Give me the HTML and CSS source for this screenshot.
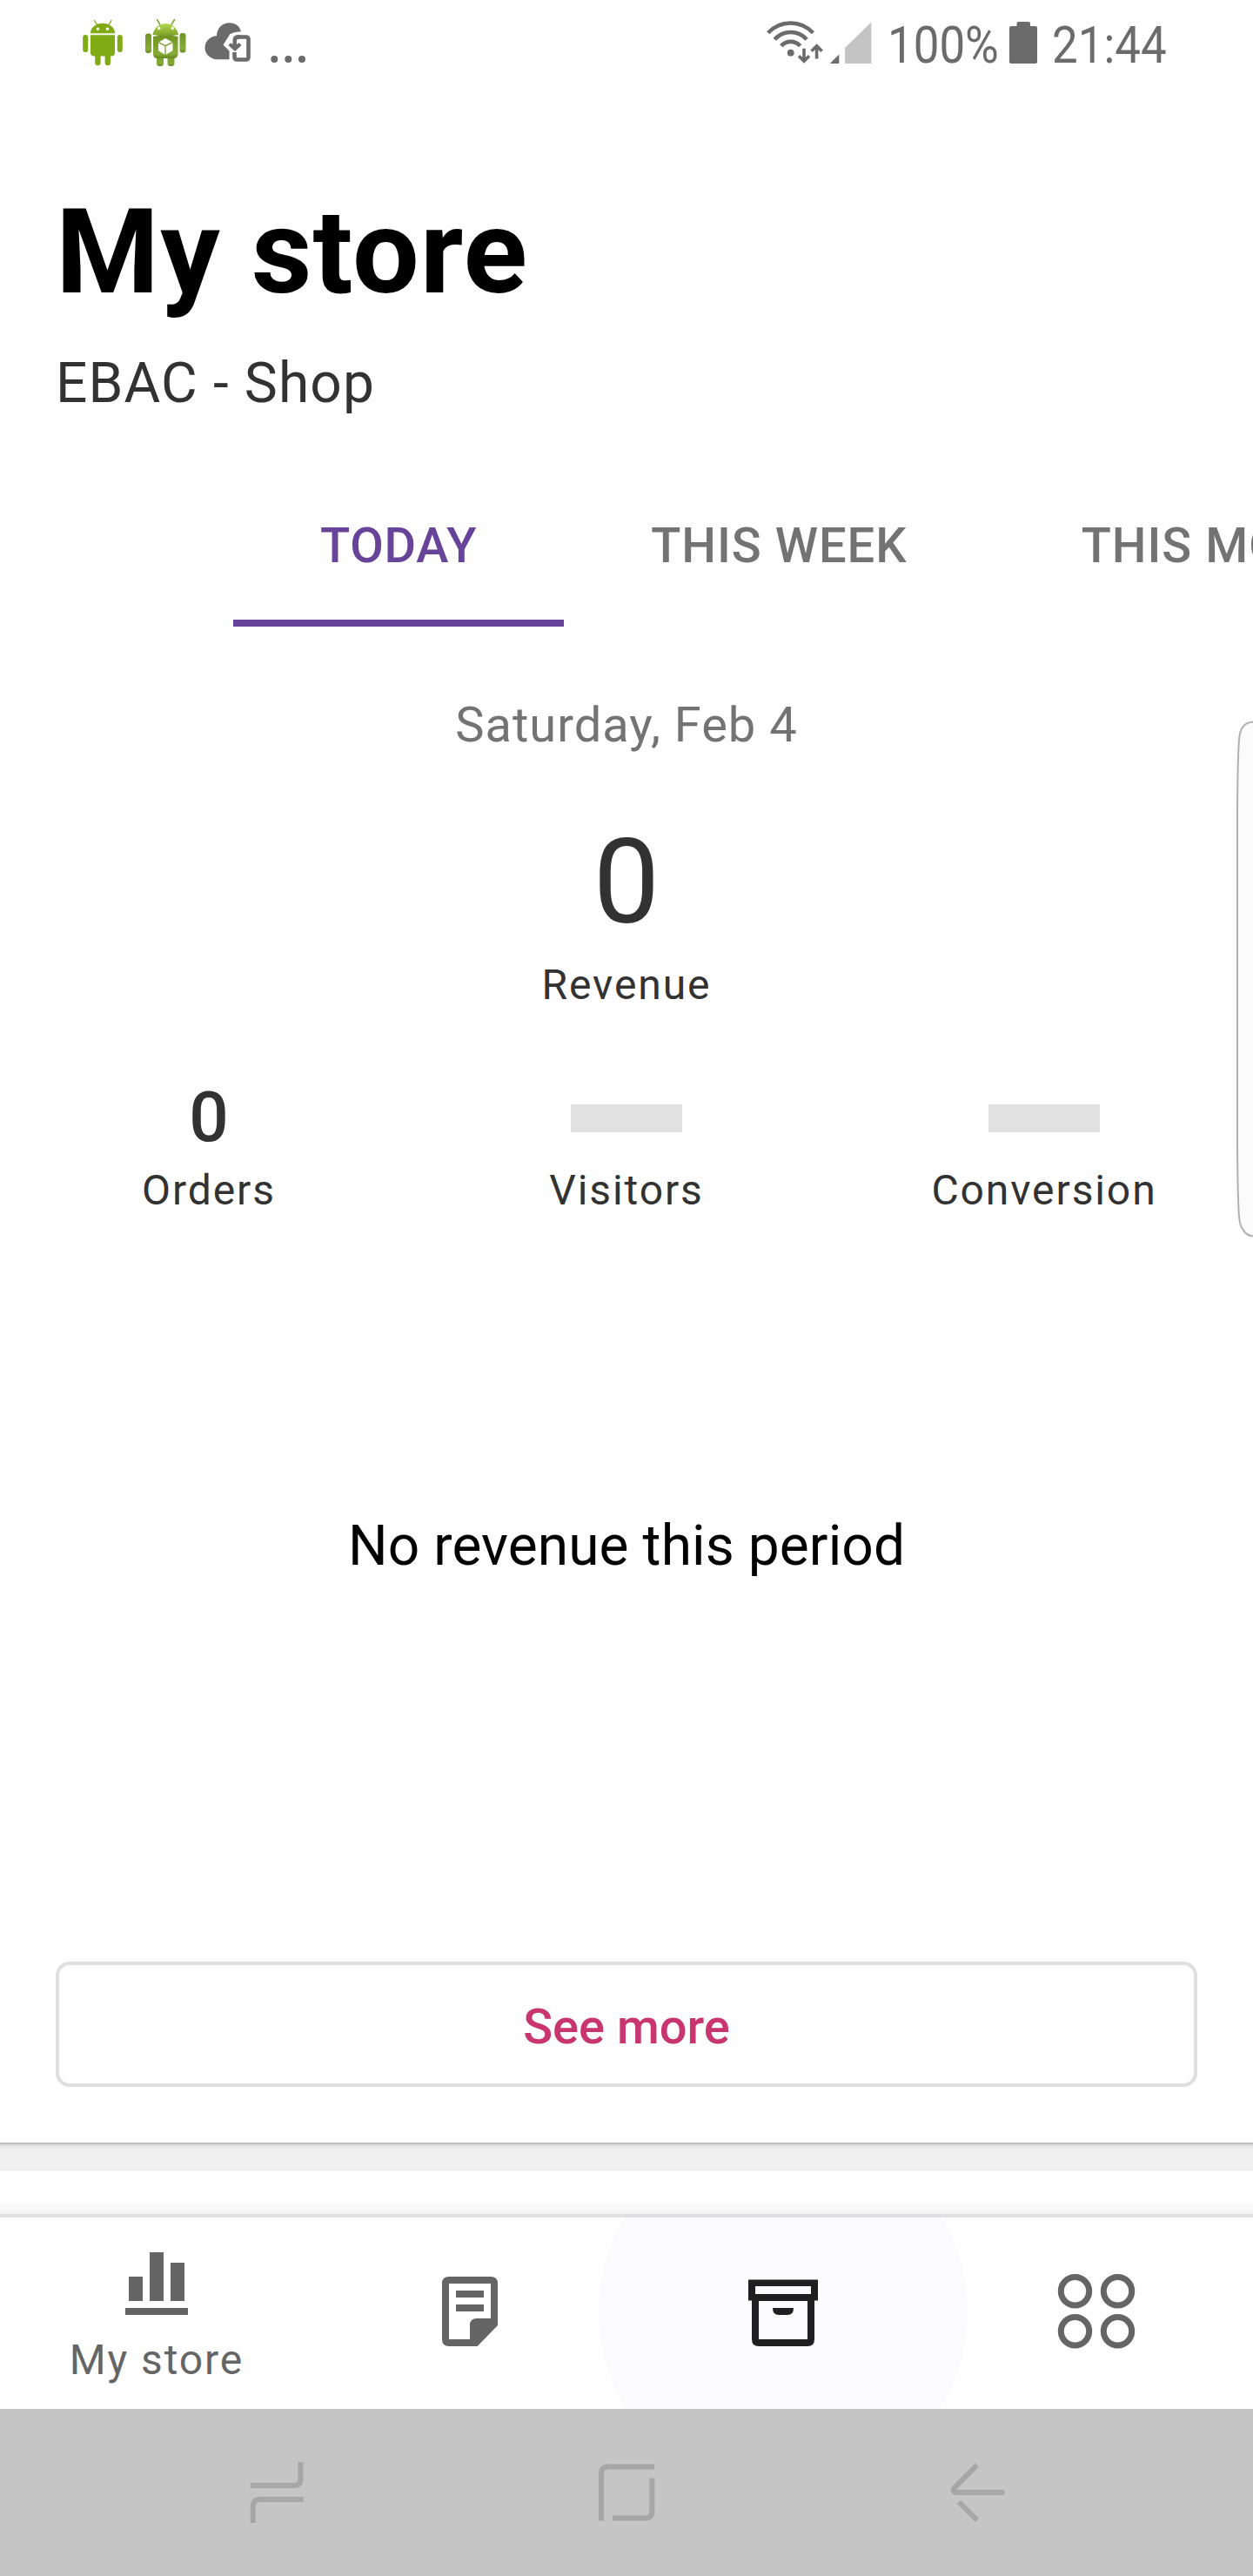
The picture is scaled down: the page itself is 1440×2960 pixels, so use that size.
FILE: index.html
```html
<!DOCTYPE html>
<html lang="en">
<head>
<meta charset="utf-8">
<title>My store</title>
<link rel="stylesheet" href="styles.css">
</head>
<body>
<div class="screen">
  <header class="status">
    <svg width="280" height="100" viewBox="80 0 280 100">
      <defs>
        <linearGradient id="lime" x1="0" y1="0" x2="0" y2="1">
          <stop offset="0" stop-color="#b4dc50"/><stop offset="1" stop-color="#7c9c28"/>
        </linearGradient>
        <linearGradient id="moss" x1="0" y1="0" x2="0" y2="1">
          <stop offset="0" stop-color="#6f9423"/><stop offset="0.8" stop-color="#86ac35"/><stop offset="1" stop-color="#668822"/>
        </linearGradient>
      </defs>
      <g fill="#80ab14">
        <path d="M108.5 23.5l3.5 6M128 23.5l-3.5 6" stroke="#80ab14" stroke-width="1.4" stroke-linecap="round"/>
        <path d="M104 38.2a14 11.5 0 0 1 28 0z"/>
        <path d="M104 40.2h28v20.3q0 4-4 4h-1V72a3.2 3.2 0 0 1-6.4 0v-7.5h-5V72a3.2 3.2 0 0 1-6.4 0v-7.5h-1.2q-4 0-4-4z"/>
        <rect x="95.2" y="40" width="6" height="20" rx="3"/>
        <rect x="134.8" y="40" width="6" height="20" rx="3"/>
        <circle cx="112.5" cy="33.3" r="1.7" fill="#fff"/>
        <circle cx="123.5" cy="33.3" r="1.7" fill="#fff"/>
      </g>
      <g fill="url(#moss)">
        <path d="M180.5 22.5l3.5 6M200.5 22.5l-3.5 6" stroke="#86a83c" stroke-width="1.6" stroke-linecap="round"/>
        <rect x="180" y="60" width="8" height="16" rx="3.5"/>
        <rect x="192.5" y="60" width="8" height="16" rx="3.5"/>
        <rect x="167" y="38.5" width="7" height="22.5" rx="3"/>
        <rect x="206.5" y="38" width="7" height="22.5" rx="3"/>
        <path d="M176 42q14.500-3.500 28.500 0v20q0 5-5 5h-18.500q-5 0-5-5z"/>
        <path d="M175.500 40a15 16 0 0 1 29.500 0q-14.500 2.500-29.500 0z" fill="url(#lime)"/>
        <circle cx="182.8" cy="32.5" r="1.7" fill="#fff"/>
        <circle cx="198.2" cy="32.5" r="1.7" fill="#fff"/>
        <path d="M190 44l8.500 4.700v9.600L190 63l-8-4.700v-9.600z" fill="#fff"/>
        <path d="M182 48.700l8 4 8.500-4M190 52.700V63" fill="none" stroke="#7b9e32" stroke-width="1.3"/>
      </g>
      <g fill="#6b6b6b">
        <path d="M263.500 68.200H250a14 13.500 0 0 1-1-27C249.500 32 255.500 26.200 263.500 26.200c7 0 12 3.800 13.500 10-7 .5-11 1.500-13.500 4.300L256.500 51.500l7 7z"/>
        <rect x="269.500" y="42.500" width="16" height="26" rx="2.500" fill="#fefefe" stroke="#6b6b6b" stroke-width="4.600"/>
        <path d="M264 39h8.500v21H264z" fill="#fefefe"/>
        <path d="M276 40.200h-3.500q-5 .3-5 6V51l-2.300-1.800-2.700 2.800 7.500 7 7.500-7-2.700-2.800-2.800 1.800V47q0-2.200 2-2.200h2z"/>
        <circle cx="315.300" cy="68" r="4"/><circle cx="331.300" cy="68" r="4"/><circle cx="347" cy="68" r="4"/>
      </g>
    </svg>
    <div class="status-right">
      <svg width="130" height="60" viewBox="878 20 130 60">
        <g fill="none" stroke="#6b6b6b" stroke-width="4.600">
          <path d="M882.800 37.800a35 35 0 0 1 51.500 0"/>
          <path d="M890.300 45.300a24.500 24.500 0 0 1 36.800 0"/>
          <path d="M897.800 52.800a14.500 14.500 0 0 1 21.800 0"/>
          <path d="M924 55.800v14M918 64.200l6 6 6-6M938.600 67.500v-14M932.600 58.800l6-6 6 6" stroke-width="3.600"/>
        </g>
        <circle cx="908.700" cy="60.700" r="3.900" fill="#6b6b6b"/>
        <path d="M964.300 62.500V73H953.800z" fill="#6b6b6b"/>
        <path d="M1001.300 25.500V73H971V55z" fill="#c4c4c4"/>
      </svg>
      <span class="percent">100%</span>
      <svg class="battery" width="32" height="48" viewBox="0 0 32 48">
        <path d="M2 5h6.500V2q0-2 2-2h11.500q2 0 2 2v3H30q2 0 2 2v39q0 2-2 2H2q-2 0-2-2V7q0-2 2-2z" fill="#6b6b6b"/>
      </svg>
      <span class="clock">21:44</span>
    </div>
  </header>

  <main class="card">
    <h1 class="title">My store</h1>
    <p class="shop">EBAC - Shop</p>
    <nav class="tabs">
      <a class="tab active">TODAY</a>
      <a class="tab">THIS WEEK</a>
      <a class="tab">THIS MONTH</a>
    </nav>
    <p class="date">Saturday, Feb 4</p>
    <p class="revenue">0</p>
    <p class="label">Revenue</p>
    <div class="stats">
      <div class="stat"><div class="value">0</div><div class="label">Orders</div></div>
      <div class="stat"><div class="value"><i class="skeleton"></i></div><div class="label">Visitors</div></div>
      <div class="stat"><div class="value"><i class="skeleton"></i></div><div class="label">Conversion</div></div>
    </div>
    <p class="empty">No revenue this period</p>
    <button class="more">See more</button>
  </main>
  <div class="gap"></div>
  <div class="next-card"></div>

  <nav class="bottom">
    <a class="item current">
      <svg width="96" height="96" viewBox="0 0 24 24" fill="#656565"><path d="M4 10h4v7H4zM10 3h4v14h-4zM16 6h4v11h-4zM3 19h18v2H3z"/></svg>
      <span class="item-label">My store</span>
    </a>
    <a class="item">
      <svg width="96" height="96" viewBox="0 0 96 96" fill="#656565"><path fill-rule="evenodd" d="M24 8h48q8 0 8 8v48L56.600 88H24q-8 0-8-8V16q0-8 8-8zM24 16v64h24V64q0-8 8-8h16V16z"/><path d="M32 24h32v8H32zM32 40h32v8H32z"/></svg>
    </a>
    <a class="item ripple">
      <svg width="96" height="96" viewBox="0 0 96 96" fill="#202020"><path fill-rule="evenodd" d="M8 11.500h80v24h-4V80q0 8-8 8H20q-8 0-8-8V35.500H8zM16 19v9h64v-9zM20 36v44h56V36z"/><path d="M36 44h24q0 8-7 8H43q-7 0-7-8z"/></svg>
    </a>
    <a class="item">
      <svg width="96" height="96" viewBox="0 0 96 96" fill="none" stroke="#656565" stroke-width="7"><circle cx="23.500" cy="24.700" r="16.200"/><circle cx="72.500" cy="24.700" r="16.200"/><circle cx="23.500" cy="70.700" r="16.200"/><circle cx="72.500" cy="70.700" r="16.200"/></svg>
    </a>
  </nav>

  <footer class="system">
    <svg width="70" height="80" viewBox="0 0 70 80"><path d="M4.800 33H54.500q8 0 8-8V6M65.800 49H16q-8.200 0-8.200 8V76"/></svg>
    <svg width="70" height="80" viewBox="0 0 70 80"><path d="M67 11.500H14q-8 0-8 8V73.500M64.300 24.500V62.500q0 8-8 8H19"/></svg>
    <svg width="70" height="80" viewBox="0 0 70 80"><path d="M67.200 41H12q-5-1-2.500-5L35.800 9.700M15 52l21 21"/></svg>
  </footer>

  <div class="edge-panel">
    <svg width="22" height="600" viewBox="0 0 22 600" fill="#fbfbfb" stroke="#b0b0b0" stroke-width="2"><path d="M24 5.500q-10 0-14 6.500-3 3-4 14-1.500 18-2 80v388q.5 62 2 80 1 11 4 14 4 8.500 14 8.500"/></svg>
  </div>
</div>
</body>
</html>
```
FILE: styles.css
```css
* { box-sizing: border-box; margin: 0; padding: 0; }
body { background: #fefefe; font-family: Roboto, "Liberation Sans", sans-serif; }
.screen { position: relative; width: 1440px; height: 2960px; overflow: hidden; display: flex; flex-direction: column; background: #fefefe; }
.status { height: 100px; padding-left: 80px; display: flex; }
.status-right { flex: 1; display: flex; padding-left: 518px; color: #6b6b6b; font-size: 60px; line-height: 103px; }
.status-right svg { margin-top: 20px; flex: none; }
.percent, .clock { flex: none; transform: scaleX(0.881); transform-origin: left; white-space: nowrap; }
.percent { width: 128px; margin-left: 11.500px; }
.status-right .battery { margin: 25px 0 0 12.500px; }
.clock { margin-left: 17px; width: 132px; }
.card { height: 2362px; display: flex; flex-direction: column; padding-top: 110px; }
.title { font-size: 136px; line-height: 160px; font-weight: 700; letter-spacing: 1.1px; color: #000; padding-left: 64px; }
.shop { font-size: 64px; line-height: 76px; margin-top: 33px; padding-left: 64px; letter-spacing: 1.15px; color: #323232; }
.tabs { display: flex; margin-top: 55px; height: 186px; padding-left: 268px; overflow: hidden; }
.tab { flex: none; padding: 0 100px; font-size: 56px; line-height: 186px; font-weight: 500; letter-spacing: 1px; color: #737373; white-space: nowrap; }
.tab.active { color: #674399; border-bottom: 8px solid #674399; letter-spacing: 0.8px; }
.date { text-align: center; font-size: 56px; line-height: 64px; letter-spacing: 1px; margin-top: 81px; color: #737373; }
.revenue { text-align: center; font-size: 136px; line-height: 160px; margin-top: 69px; color: #323232; }
.label { text-align: center; font-size: 48px; line-height: 56px; letter-spacing: 1.9px; margin-top: 10px; color: #323232; }
.stats { display: grid; grid-template-columns: repeat(3, 1fr); margin-top: 76px; }
.value { height: 96px; font-size: 80px; line-height: 96px; font-weight: 500; color: #323232; display: flex; justify-content: center; }
.skeleton { width: 128px; height: 32px; margin-top: 33px; background: #e1e1e1; }
.stats .label { margin-top: 8px; }
.empty { text-align: center; font-size: 64px; line-height: 76px; letter-spacing: 0.1px; margin-top: 343px; color: #000; }
.more { height: 144px; margin: 439px 64px 0; padding-top: 6px; border: 4px solid #dfdfdf; border-radius: 16px; background: none; color: #c9356e; font: 500 56px/64px Roboto, sans-serif; }
.gap { height: 32px; background: linear-gradient(#b5b5b5, #dcdcdc 3px, #ebebeb 6px, #f0f0f0 9px); border-bottom: 1px solid #e8e8e8; }
.next-card { height: 50px; background: linear-gradient(#fefefe 34px, #f3f3f3); }
.bottom { position: relative; height: 224px; overflow: hidden; box-shadow: inset 0 4px #e1e1e1; display: grid; grid-template-columns: repeat(4, 1fr); }
.item { position: relative; display: flex; flex-direction: column; align-items: center; padding-top: 64px; }
.item svg { position: relative; }
.current { padding-top: 32px; }
.item-label { margin-top: 12px; font-size: 48px; line-height: 56px; letter-spacing: 1.9px; color: #656565; }
.ripple::before { content: ""; position: absolute; left: -32px; top: -100px; width: 424px; height: 424px; border-radius: 50%; background: rgba(100, 100, 200, 0.02); }
.system { height: 192px; padding-top: 55px; background: #c5c5c5; display: flex; justify-content: center; gap: 332px; }
.system svg { fill: none; stroke: #a6a6a6; stroke-width: 6; }
.edge-panel { position: absolute; right: 0; top: 824px; width: 22px; height: 600px; }
```
